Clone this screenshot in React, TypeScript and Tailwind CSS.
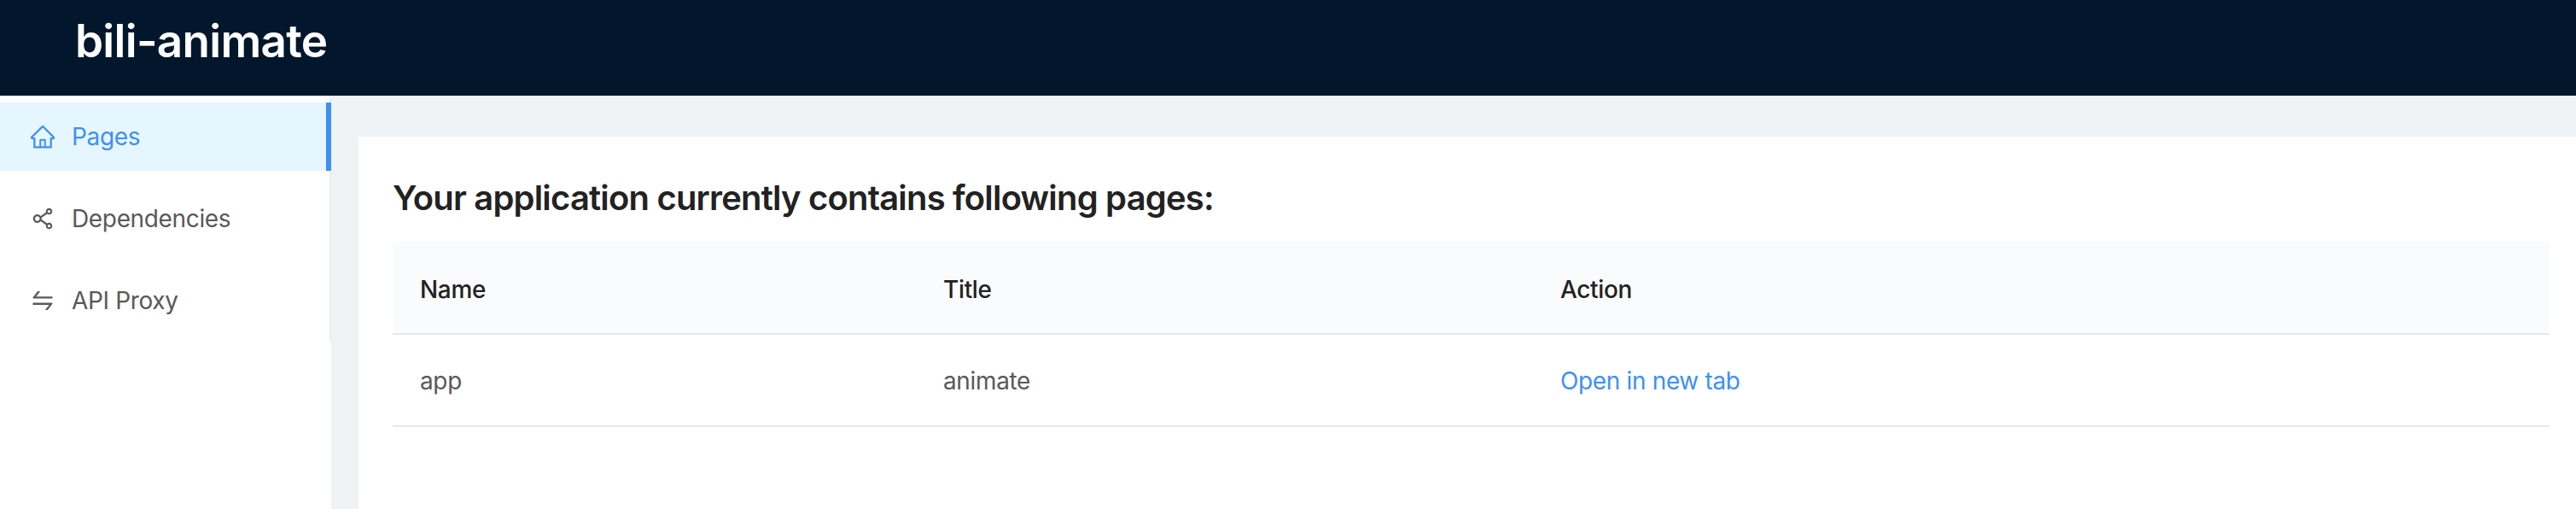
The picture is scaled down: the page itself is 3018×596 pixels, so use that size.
import { AiOutlineHome, AiOutlineShareAlt, AiOutlineSwap } from "react-icons/ai";

const navItems = [
  { label: "Pages", icon: AiOutlineHome, active: true },
  { label: "Dependencies", icon: AiOutlineShareAlt, active: false },
  { label: "API Proxy", icon: AiOutlineSwap, active: false },
];

export default function App() {
  return (
    <div className="flex h-[596px] w-[3018px] flex-col overflow-hidden bg-white font-['Inter',sans-serif]">
      <header className="flex h-[112px] shrink-0 bg-[#03172c] pl-[88px]">
        <h1 className="pt-5 text-[53px] leading-[56px] font-semibold text-white tracking-[-0.7px]">bili-animate</h1>
      </header>

      <div className="flex flex-1">
        <aside className="w-[388px] shrink-0 bg-white">
          <nav className="flex h-[288px] flex-col gap-4 border-r-2 border-[#ebeef0] py-2">
            {navItems.map((item) => {
              const Icon = item.icon;
              return (
                <a
                  key={item.label}
                  className={
                    item.active
                      ? "-mr-0.5 flex h-20 items-center gap-[18px] border-r-[6px] border-[#408ff7] bg-[#e6f6fe] pl-[34px] text-[28px] tracking-[-0.35px] text-[#408ff7]"
                      : "flex h-20 items-center gap-[18px] pl-[34px] text-[28px] tracking-[-0.35px] text-[#595959]"
                  }
                >
                  <Icon size={32} />
                  <span>{item.label}</span>
                </a>
              );
            })}
          </nav>
        </aside>

        <main className="flex-1 bg-[#eff3f6] pt-12 pl-8">
          <div className="h-full bg-white pt-10 pr-[31px] pl-10">
            <h2 className="text-[40px] leading-[64px] font-semibold tracking-[-0.82px] text-[#222222]">
              Your application currently contains following pages:
            </h2>
            <table className="mt-[19px] w-full table-fixed border-collapse text-left text-[28px] tracking-[-0.35px]">
              <thead>
                <tr className="h-[108px] border-b-2 border-[#e8e8e8] bg-[#fafbfc] text-[#222222]">
                  <th className="w-[613px] pt-1 pl-8 font-medium">Name</th>
                  <th className="w-[723px] pt-1 pl-8 font-medium">Title</th>
                  <th className="pt-1 pl-8 font-medium">Action</th>
                </tr>
              </thead>
              <tbody>
                <tr className="h-[108px] border-b-2 border-[#e8e8e8] text-[#595959]">
                  <td className="pt-0.5 pl-8">app</td>
                  <td className="pt-0.5 pl-8">animate</td>
                  <td className="pt-0.5 pl-8 text-[#408ff7]">
                    <a>Open in new tab</a>
                  </td>
                </tr>
              </tbody>
            </table>
          </div>
        </main>
      </div>
    </div>
  );
}
